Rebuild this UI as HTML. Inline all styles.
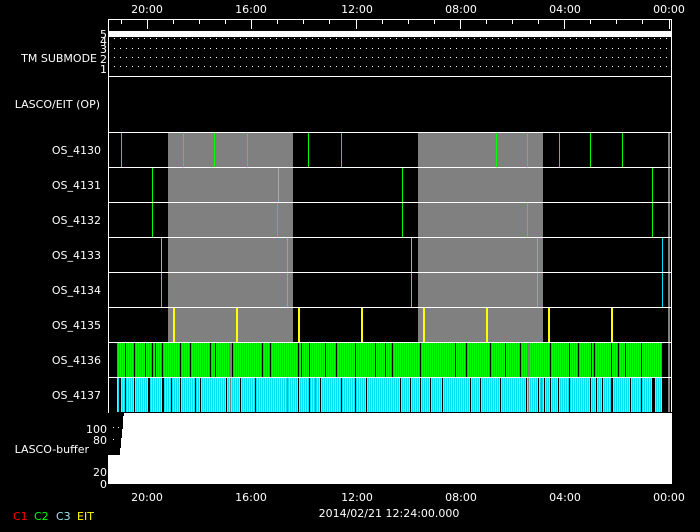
<!DOCTYPE html>
<html><head><style>
body{margin:0;background:#000;width:700px;height:532px;overflow:hidden}
svg{display:block}
text{font-family:"DejaVu Sans","Liberation Sans",sans-serif;font-size:11px;fill:#fff}
</style></head><body>
<svg width="700" height="532" xmlns="http://www.w3.org/2000/svg">
<defs>
<pattern id="g" width="2" height="10" patternUnits="userSpaceOnUse"><rect width="1" height="10" fill="#00ff00"/><rect x="1" width="1" height="10" fill="#00d000"/></pattern>
<pattern id="c" width="2" height="10" patternUnits="userSpaceOnUse"><rect width="1" height="10" fill="#00e0f0"/><rect x="1" width="1" height="10" fill="#a0d8e0"/></pattern>
</defs>
<g text-anchor="middle">
<text x="147" y="13">20:00</text><text x="251" y="13">16:00</text><text x="357" y="13">12:00</text><text x="461" y="13">08:00</text><text x="565" y="13">04:00</text><text x="669" y="13">00:00</text>
<text x="147" y="501">20:00</text><text x="251" y="501">16:00</text><text x="357" y="501">12:00</text><text x="461" y="501">08:00</text><text x="565" y="501">04:00</text><text x="669" y="501">00:00</text>
<text x="389" y="517">2014/02/21  12:24:00.000</text>
</g>
<rect x="168" y="132" width="125" height="210" fill="#808080"/>
<rect x="418" y="132" width="125" height="210" fill="#808080"/>
<rect x="108" y="31" width="563" height="6" fill="#fff"/>
<g stroke="#fff" stroke-width="1" stroke-dasharray="1 5">
<path d="M114 38.5h557M114 48.5h557M114 57.5h557M114 66.5h557"/>
</g>
<rect x="117" y="342" width="545" height="35" fill="url(#g)"/>
<rect x="117" y="377" width="545" height="35" fill="url(#c)"/>
<g stroke="#000" stroke-width="1" transform="translate(0.5,0)">
<path d="M125 342v70M134 342v70M152 342v35M155 342v35M162 342v35M171 377v35M180 342v70M195 377v35M210 342v35M226 377v35M262 342v35M298 342v70M301 342v35M309 342v70M320 377v35M336 342v35M341 377v35M355 342v70M375 342v35M400 377v35M420 342v70M442 377v35M455 342v35M480 377v35M505 342v35M550 342v70M558 377v35M569 342v70M590 377v35M591 342v35M594 342v35M611 342v70M612 377v35M618 342v35M641 342v70M653 377v35M596 377v35M538 377v35M544 377v35M145 342v35M190 342v35M200 377v35M215 342v35M232 342v35M240 377v35M255 377v35M270 342v35M325 342v35M366 377v35M385 342v35M392 342v35M410 377v35M430 377v35M466 342v35M470 377v35M490 342v35M500 377v35M520 342v35M526 377v35M578 342v35M602 377v35M625 342v35M630 377v35"/>
</g>
<rect x="119" y="377" width="2" height="35" fill="#000"/>
<rect x="148" y="377" width="2" height="35" fill="#000"/>
<rect x="162" y="377" width="2" height="35" fill="#000"/>
<rect x="652" y="377" width="3" height="35" fill="#000"/>
<g fill="#808080">
<rect x="287" y="342" width="1" height="70"/><rect x="315" y="342" width="1" height="70"/><rect x="541" y="342" width="1" height="70"/><rect x="528" y="342" width="1" height="70"/><rect x="668" y="132" width="2" height="280"/><rect x="230" y="342" width="1" height="70"/>
</g>
<g fill="#00ff00">
<rect x="121" y="132" width="1" height="35"/><rect x="183" y="132" width="1" height="35"/><rect x="214" y="132" width="1" height="35"/><rect x="247" y="132" width="1" height="35"/><rect x="308" y="132" width="1" height="35"/><rect x="341" y="132" width="1" height="35"/><rect x="496" y="132" width="1" height="35"/><rect x="527" y="132" width="1" height="35"/><rect x="559" y="132" width="1" height="35"/><rect x="590" y="132" width="1" height="35"/><rect x="622" y="132" width="1" height="35"/>
<rect x="152" y="167" width="1" height="35"/><rect x="402" y="167" width="1" height="35"/><rect x="652" y="167" width="1" height="35"/>
<rect x="152" y="202" width="1" height="35"/><rect x="277" y="202" width="1" height="35"/><rect x="402" y="202" width="1" height="35"/><rect x="527" y="202" width="1" height="35"/><rect x="652" y="202" width="1" height="35"/>
</g>
<g fill="#00e0f0">
<rect x="287" y="237" width="1" height="35"/><rect x="537" y="237" width="1" height="35"/><rect x="662" y="237" width="1" height="35"/>
<rect x="161" y="272" width="1" height="35"/><rect x="287" y="272" width="1" height="35"/><rect x="411" y="272" width="1" height="35"/><rect x="537" y="272" width="1" height="35"/><rect x="662" y="272" width="1" height="35"/>
</g>
<g fill="#aaa"><rect x="161" y="237" width="1" height="35"/><rect x="411" y="237" width="1" height="35"/><rect x="278" y="167" width="1" height="35"/></g>
<g fill="#ffff00">
<rect x="173" y="307" width="2" height="35"/><rect x="236" y="307" width="2" height="35"/><rect x="298" y="307" width="2" height="35"/><rect x="361" y="307" width="2" height="35"/><rect x="423" y="307" width="2" height="35"/><rect x="486" y="307" width="2" height="35"/><rect x="548" y="307" width="2" height="35"/><rect x="611" y="307" width="2" height="35"/>
</g>
<g stroke="#fff" stroke-width="1" fill="none">
<path d="M108.5 19v465M671.5 19v393M108 19.5h564M108 76.5h564M108 132.5h564M108 167.5h564M108 202.5h564M108 237.5h564M108 272.5h564M108 307.5h564M108 342.5h564M108 377.5h564"/>
<path d="M121.5 19v5M147.5 19v10M173.5 19v5M199.5 19v5M225.5 19v5M251.5 19v10M277.5 19v5M303.5 19v5M329.5 19v5M356.5 19v10M382.5 19v5M408.5 19v5M434.5 19v5M460.5 19v10M486.5 19v5M512.5 19v5M538.5 19v5M564.5 19v10M590.5 19v5M616.5 19v5M642.5 19v5M669.5 19v10"/>
</g>
<rect x="108" y="413" width="564" height="71" fill="#fff"/>
<path d="M108 413h16v3h-1v13h-1v9h-1v10h-1v7h-12z" fill="#000"/>
<rect x="113" y="427" width="1" height="1" fill="#fff"/><rect x="118" y="427" width="1" height="1" fill="#fff"/><rect x="113" y="439" width="1" height="1" fill="#fff"/>
<g text-anchor="end">
<text x="97" y="62">TM SUBMODE</text>
<text x="100" y="108">LASCO/EIT (OP)</text>
<text x="101" y="154">OS_4130</text>
<text x="101" y="189">OS_4131</text>
<text x="101" y="224">OS_4132</text>
<text x="101" y="259">OS_4133</text>
<text x="101" y="294">OS_4134</text>
<text x="101" y="329">OS_4135</text>
<text x="101" y="364">OS_4136</text>
<text x="101" y="399">OS_4137</text>
<text x="89" y="453">LASCO-buffer</text>
<text x="107" y="433">100</text><text x="107" y="444">80</text><text x="107" y="476">20</text><text x="107" y="488">0</text>
<g style="font-size:9px"><text x="107" y="38">5</text><text x="107" y="45">4</text><text x="107" y="53">3</text><text x="107" y="63">2</text><text x="107" y="73">1</text></g>
</g>
<g style="font-size:10px">
<text x="13" y="520" style="fill:#ff0000">C1</text>
<text x="34" y="520" style="fill:#00ff00">C2</text>
<text x="56" y="520" style="fill:#a0e0f0">C3</text>
<text x="77" y="520" style="fill:#ffff00">EIT</text>
</g>
</svg>
</body></html>
